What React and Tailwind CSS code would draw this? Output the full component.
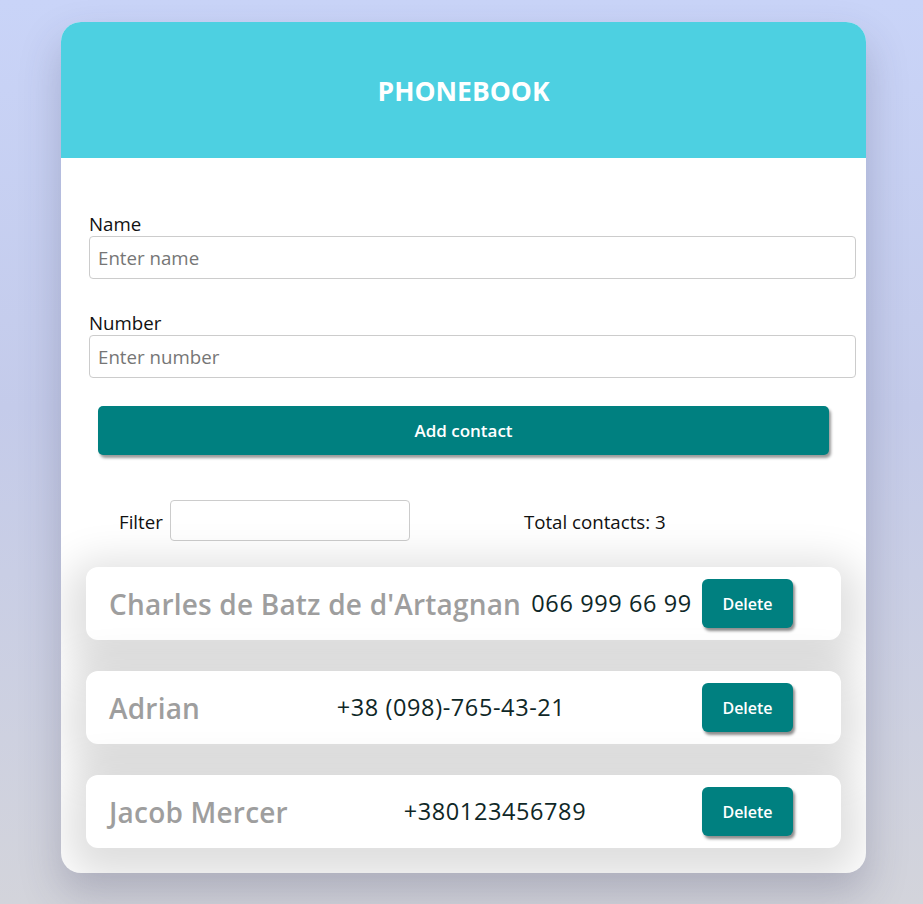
import React, { useState } from 'react';

const initialContacts = [
    { id: 1, name: "Charles de Batz de d'Artagnan", number: '066 999 66 99' },
    { id: 2, name: 'Adrian', number: '+38 (098)-765-43-21' },
    { id: 3, name: 'Jacob Mercer', number: '+380123456789' },
];

const ContactItem = ({ contact, onDelete }) => (
    <li className="flex h-[73px] items-center justify-between rounded-[12px] bg-white pl-[23px] pr-[48px] shadow-[0_12px_40px_18px_rgba(0,0,0,0.13)]">
        <span className="text-[28px] font-semibold tracking-[0.2px] text-[#9e9e9e]">{contact.name}</span>
        <span className="text-[23.5px] font-medium tracking-[0.6px] text-[#0f2727]">{contact.number}</span>
        <button
            onClick={() => onDelete(contact.id)}
            className="h-[49px] w-[91px] rounded-[6px] bg-[#008080] text-[16px] font-semibold text-white shadow-[2px_3px_3px_rgba(0,0,0,0.45)]"
        >
            Delete
        </button>
    </li>
);

export default function App() {
    const [contacts, setContacts] = useState(initialContacts);
    const [filter, setFilter] = useState('');

    const visible = contacts.filter(c => c.name.toLowerCase().includes(filter.toLowerCase()));

    return (
        <div className="min-h-[904px] bg-[linear-gradient(180deg,#c9d4f8_0%,#c4cbea_45%,#d3d4db_100%)] pt-[22px] pb-[30px] font-['Open_Sans',sans-serif]">
            <div className="ml-[61px] w-[805px] overflow-hidden rounded-[20px] bg-white shadow-[0_20px_40px_rgba(60,60,90,0.25)]">
                {/* Header */}
                <div className="flex h-[136px] items-center justify-center bg-[#4dd0e1] pt-[4px]">
                    <h1 className="text-[26.5px] font-bold text-white">PHONEBOOK</h1>
                </div>

                <div className="pt-[54px] pb-[25px]">
                    {/* Form */}
                    <div className="pl-[28px] pr-[10px]">
                        <label className="block text-[18.7px] leading-[24px] text-[#111]">Name</label>
                        <input
                            className="h-[43px] w-full rounded-[4px] border border-[#cccccc] px-[8px] text-[18.7px] outline-none placeholder:text-[#767676]"
                            placeholder="Enter name"
                        />
                        <label className="mt-[32px] block text-[18.7px] leading-[24px] text-[#111]">Number</label>
                        <input
                            className="h-[43px] w-full rounded-[4px] border border-[#cccccc] px-[8px] text-[18.7px] outline-none placeholder:text-[#767676]"
                            placeholder="Enter number"
                        />
                    </div>
                    <div className="mt-[28px] px-[37px]">
                        <button className="h-[49px] w-full rounded-[5px] bg-[#008080] text-[17px] font-semibold text-white shadow-[2px_3px_3px_rgba(0,0,0,0.4)]">
                            Add contact
                        </button>
                    </div>

                    {/* Filter */}
                    <div className="mt-[45px] flex h-[41px] items-center pl-[58px]">
                        <span className="pt-[3px] text-[18.7px] text-[#111]">Filter</span>
                        <input
                            value={filter}
                            onChange={e => setFilter(e.target.value)}
                            className="ml-[7px] h-[41px] w-[240px] rounded-[4px] border border-[#cccccc] px-[8px] text-[18px] outline-none"
                        />
                        <span className="ml-[114px] pt-[3px] text-[18.7px] text-[#111]">Total contacts: {contacts.length}</span>
                    </div>

                    {/* Contacts */}
                    <ul className="mt-[26px] flex flex-col gap-[31px] px-[25px]">
                        {visible.map(contact => (
                            <ContactItem
                                key={contact.id}
                                contact={contact}
                                onDelete={id => setContacts(contacts.filter(c => c.id !== id))}
                            />
                        ))}
                    </ul>
                </div>
            </div>
        </div>
    );
}
